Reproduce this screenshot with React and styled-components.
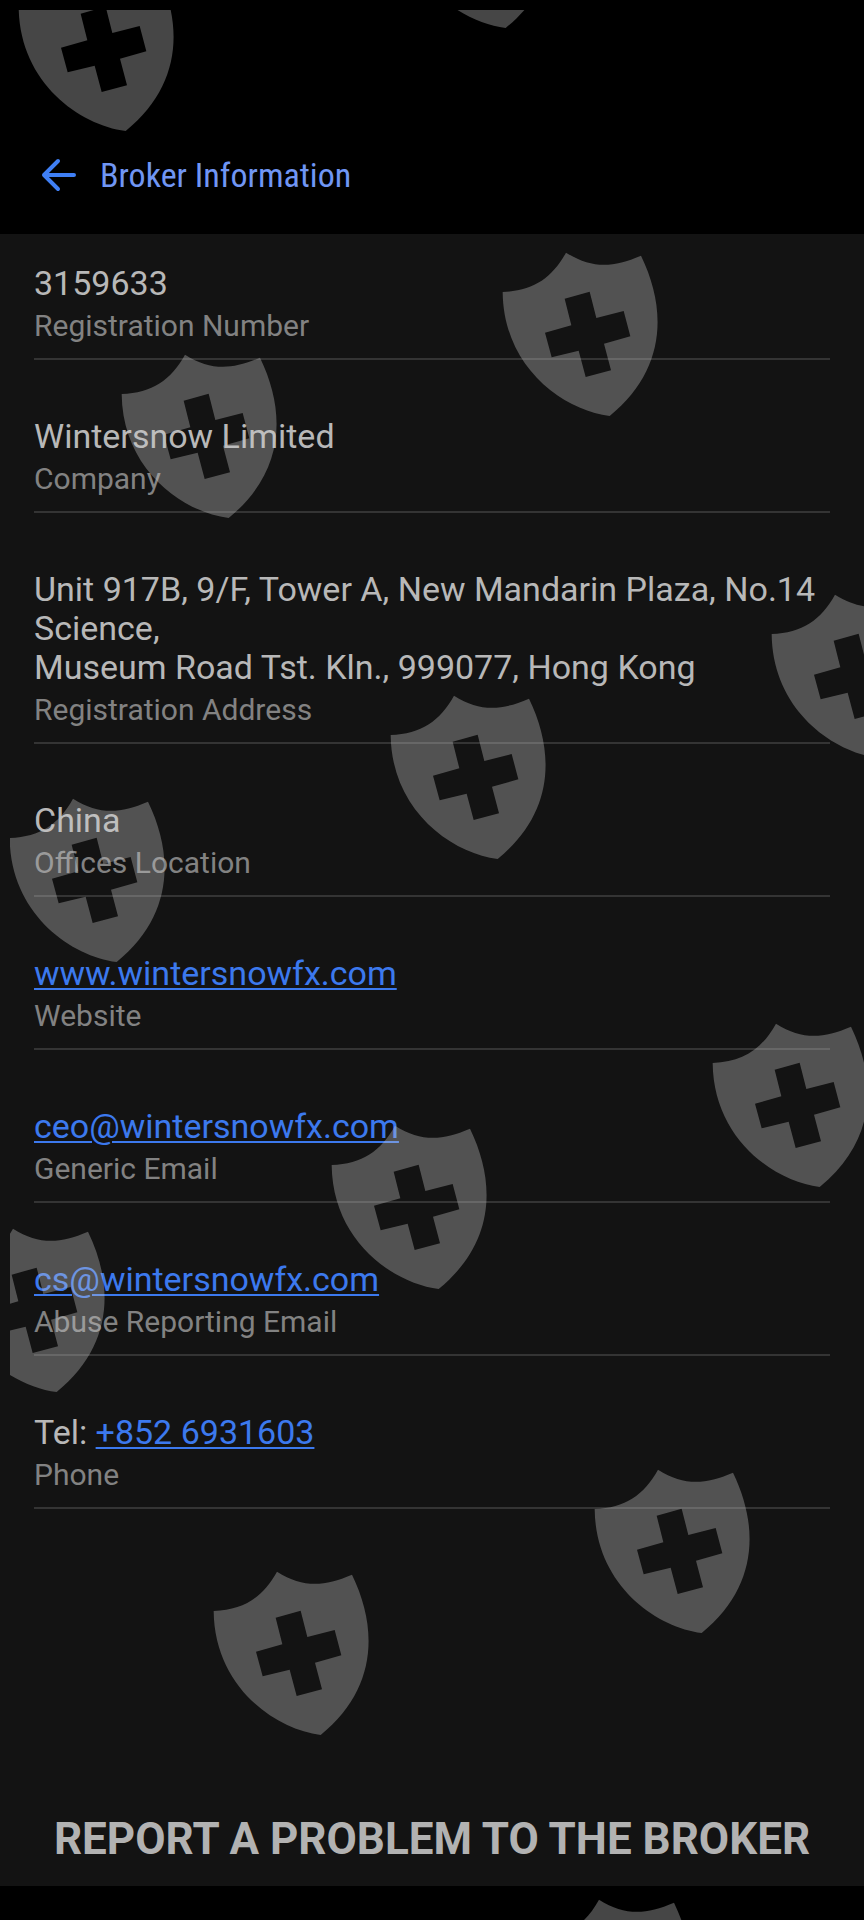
import React from 'react';
import styled, { createGlobalStyle } from 'styled-components';


const GlobalStyle = createGlobalStyle`
    body {
        margin: 0;
        background-color: #000;
        font-family: Roboto, sans-serif;
    }
    * {
        box-sizing: border-box;
    }
`

const Page = styled.div`
    position: relative;
    display: flex;
    flex-direction: column;
    min-height: 100vh;
    padding-bottom: 34px;
    overflow: hidden;
    background-color: #000;
`

const Header = styled.header`
    display: flex;
    align-items: center;
    gap: 24px;
    padding: 154px 34px 38px;
`

const BackButton = styled.button`
    display: flex;
    padding: 0;
    border: none;
    background: none;
    cursor: pointer;
`

const Title = styled.h1`
    margin: 0;
    font-family: 'Roboto Condensed', 'Liberation Sans Narrow', Roboto, sans-serif;
    font-size: 34px;
    line-height: 42px;
    font-weight: 400;
    color: #7096f4;
`

const Content = styled.main`
    flex: 1;
    display: flex;
    flex-direction: column;
    justify-content: space-between;
    padding: 30px 34px 21px;
    background-color: #131313;
`

const InfoList = styled.dl`
    display: flex;
    flex-direction: column;
    gap: 57px;
    margin: 0;
`

const InfoRow = styled.div`
    display: flex;
    flex-direction: column-reverse;
    gap: 5px;
    padding-bottom: 15px;
    border-bottom: 2px solid #343434;
`

const Value = styled.dd`
    margin: 0;
    font-size: 34px;
    line-height: 39px;
    color: #b8b8b8;
    white-space: pre-line;
`

const Label = styled.dt`
    font-size: 30px;
    line-height: 35px;
    color: #828282;
`

const InfoLink = styled.a`
    color: #3c79ee;
    text-decoration: underline;
    text-decoration-thickness: 2px;
    text-underline-offset: 3px;
`

const ReportButton = styled.button`
    padding: 0;
    border: none;
    background: none;
    font-family: inherit;
    font-size: 44px;
    line-height: 52px;
    font-weight: 700;
    color: #b2b2b2;
    text-align: center;
    cursor: pointer;
`

const MarkLayer = styled.div`
    position: absolute;
    inset: 10px 0 0 10px;
    overflow: hidden;
    pointer-events: none;
`

const Mark = styled.svg`
    position: absolute;
    left: ${props => props.$x}px;
    top: ${props => props.$y}px;
    width: 157px;
    height: 165px;
    fill: rgba(200, 200, 200, 0.35);
`

const rows = [
    { label: 'Registration Number', value: '3159633' },
    { label: 'Company', value: 'Wintersnow Limited' },
    {
        label: 'Registration Address',
        value: 'Unit 917B, 9/F, Tower A, New Mandarin Plaza, No.14 Science,\nMuseum Road Tst. Kln., 999077, Hong Kong',
    },
    { label: 'Offices Location', value: 'China' },
    { label: 'Website', link: 'www.wintersnowfx.com', href: 'http://www.wintersnowfx.com' },
    { label: 'Generic Email', link: 'ceo@wintersnowfx.com', href: 'mailto:ceo@wintersnowfx.com' },
    { label: 'Abuse Reporting Email', link: 'cs@wintersnowfx.com', href: 'mailto:cs@wintersnowfx.com' },
    { label: 'Phone', value: 'Tel: ', link: '+852 6931603', href: 'tel:+8526931603' },
];

// where each shield sits on the layer
const marks = [
    [8, -43], [388, -146], [492, 242], [111, 344], [761, 584], [380, 685],
    [-1, 788], [702, 1013], [321, 1115], [-61, 1218], [584, 1459], [203, 1561], [525, 1889],
];

const Shield = ({ x, y }) => (
    <Mark $x={x} $y={y} viewBox="66 66 471 495" aria-hidden="true">
        <path
            fillRule="evenodd"
            d="M68 186C160 182 215 145 258 68C335 115 395 115 483 77C562 240 558 420 389 558C248 540 70 410 68 186Z
            M254 206L274 286L195 308L215 382L296 362L317 441L393 421L372 341L451 319L431 243L349 264L329 185Z"
        />
    </Mark>
);

const App = () => {
    return (
        <>
            <GlobalStyle />
            <Page>
                <Header>
                    <BackButton aria-label="Back">
                        <svg width="42" height="42" viewBox="0 0 42 42" fill="none" stroke="#3f7ff5" strokeWidth="4" strokeLinecap="round" strokeLinejoin="round">
                            <path d="M40 21H10M24 7L10 21L24 35" />
                        </svg>
                    </BackButton>
                    <Title>Broker Information</Title>
                </Header>
                <Content>
                    <InfoList>
                        {rows.map(row => (
                            <InfoRow key={row.label}>
                                <Label>{row.label}</Label>
                                <Value>
                                    {row.value}
                                    {row.link && <InfoLink href={row.href}>{row.link}</InfoLink>}
                                </Value>
                            </InfoRow>
                        ))}
                    </InfoList>
                    <ReportButton>REPORT A PROBLEM TO THE BROKER</ReportButton>
                </Content>
                <MarkLayer>
                    {marks.map(([x, y]) => (
                        <Shield key={`${x}-${y}`} x={x} y={y} />
                    ))}
                </MarkLayer>
            </Page>
        </>
    );
}

export default App;
